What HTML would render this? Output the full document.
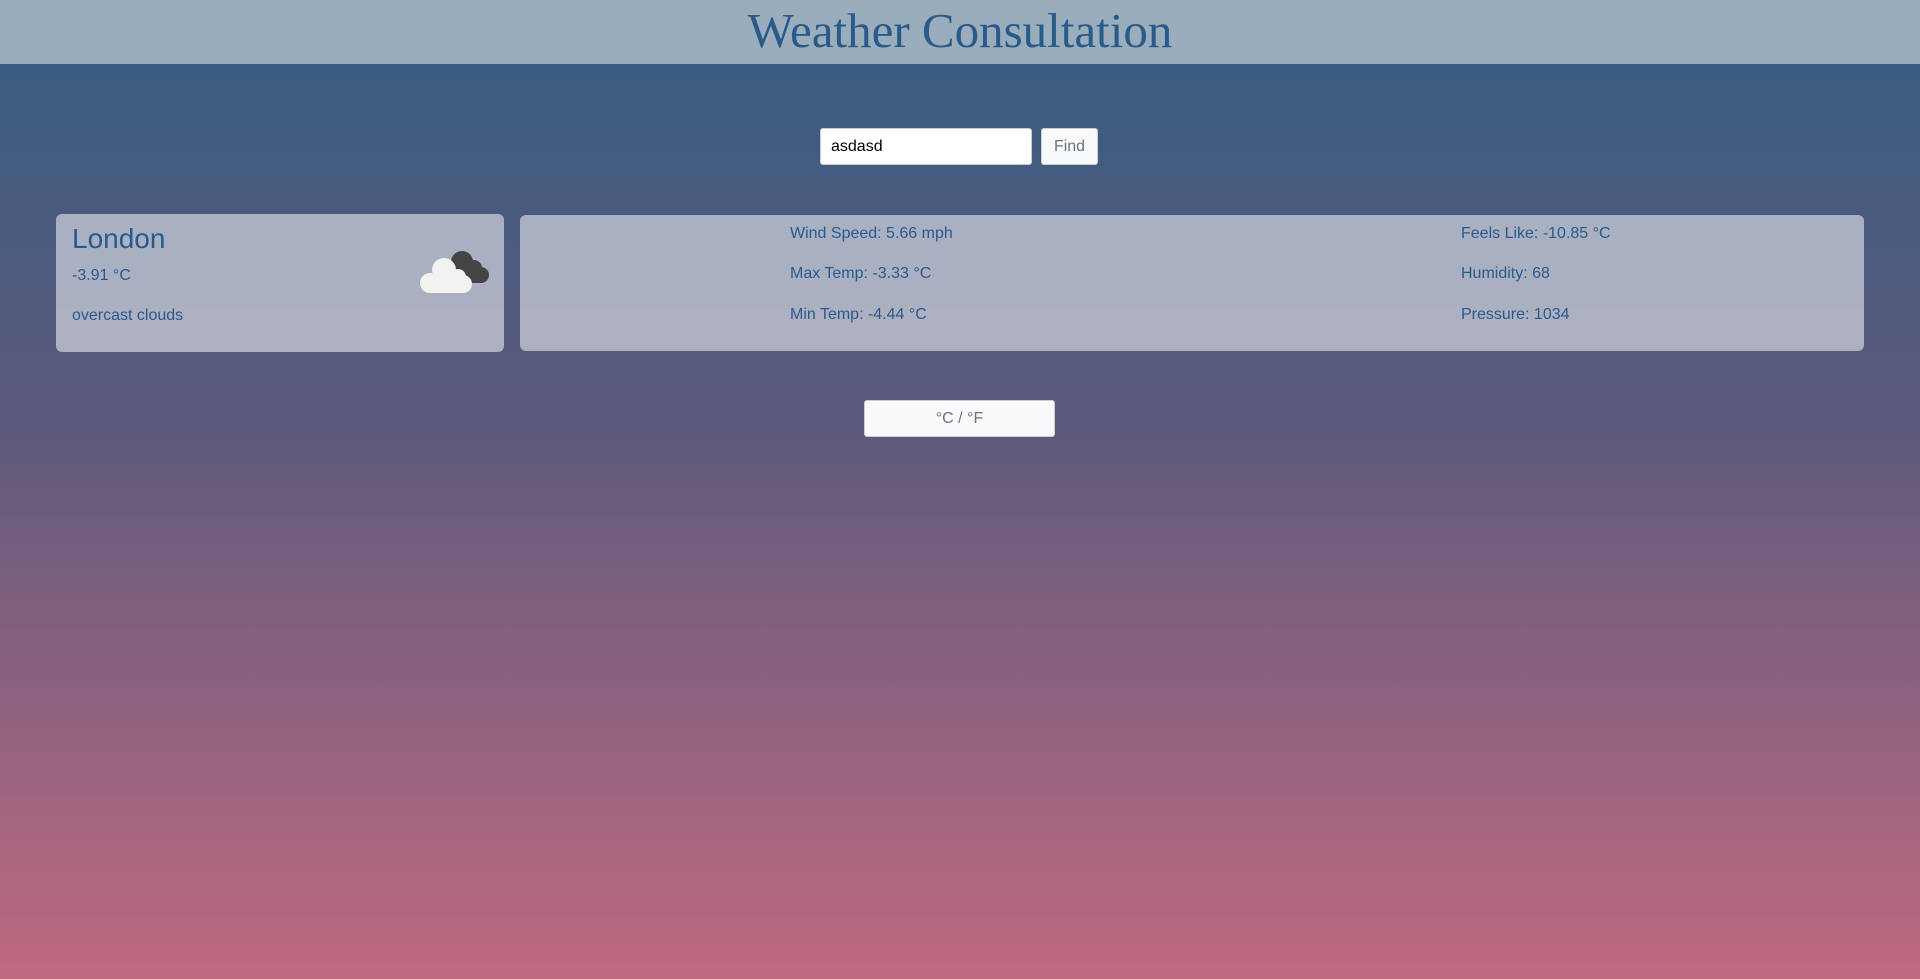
<!DOCTYPE html>
<html><head><style>
html,body{margin:0;padding:0;}
body{width:1920px;height:979px;overflow:hidden;background:linear-gradient(180deg,#3a5c80 0px,#3a5c80 64px,#5c5a7c 420px,#c06a80 979px);font-family:"Liberation Sans",sans-serif;position:relative;color:#2a5a8c;}
.hdr{position:absolute;left:0;top:0;width:1920px;height:64px;background:#9aadbd;text-align:center;font-family:"Liberation Serif",serif;font-size:49px;line-height:62px;color:#2a5a8a;}
.inp{position:absolute;left:820px;top:128px;width:212px;height:37px;background:#fff;border:1px solid #ccc;border-radius:3px;box-sizing:border-box;font-size:16px;line-height:35px;padding-left:10px;color:#000;}
.btn{position:absolute;background:#f8f9fa;border:1px solid #ccc;border-radius:3px;box-sizing:border-box;text-align:center;color:#6c757d;font-size:16px;}
.card{position:absolute;background:rgba(255,255,255,.52);border-radius:6px;}
.t{position:absolute;font-size:16px;white-space:nowrap;}
</style></head><body>
<div class="hdr">Weather Consultation</div>
<div class="inp">asdasd</div>
<div class="btn" style="left:1041px;top:128px;width:57px;height:37px;line-height:35px;">Find</div>
<div class="card" style="left:56px;top:214px;width:448px;height:138px;"></div>
<div class="card" style="left:520px;top:215px;width:1344px;height:136px;"></div>
<div class="t" style="left:72px;top:223px;font-size:28px;">London</div>
<div class="t" style="left:72px;top:267px;">-3.91 °C</div>
<div class="t" style="left:72px;top:307px;">overcast clouds</div>
<svg style="position:absolute;left:418px;top:248px" width="74" height="48" viewBox="0 0 74 48">
<g fill="#444"><circle cx="44" cy="14" r="11"/><circle cx="56" cy="20" r="8"/><circle cx="63" cy="27" r="8"/><rect x="38" y="20" width="25" height="15"/></g>
<g fill="#f2f2f0"><circle cx="26" cy="22" r="12"/><circle cx="40" cy="29" r="8"/><circle cx="12" cy="35" r="10"/><circle cx="45" cy="36" r="9"/><rect x="12" y="28" width="34" height="17" rx="2"/></g>
</svg>
<div class="t" style="left:790px;top:225px;">Wind Speed: 5.66 mph</div>
<div class="t" style="left:790px;top:265px;">Max Temp: -3.33 °C</div>
<div class="t" style="left:790px;top:306px;">Min Temp: -4.44 °C</div>
<div class="t" style="left:1461px;top:225px;">Feels Like: -10.85 °C</div>
<div class="t" style="left:1461px;top:265px;">Humidity: 68</div>
<div class="t" style="left:1461px;top:306px;">Pressure: 1034</div>
<div class="btn" style="left:864px;top:400px;width:191px;height:37px;line-height:35px;">°C / °F</div>
</body></html>
